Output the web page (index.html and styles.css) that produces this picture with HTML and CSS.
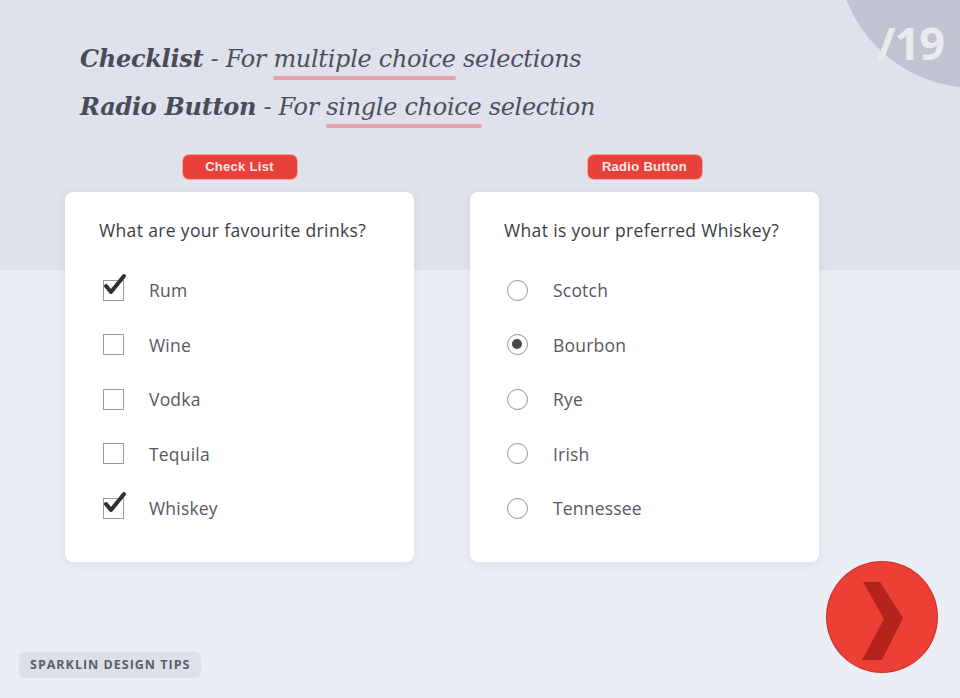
FILE: index.html
```html
<!DOCTYPE html>
<html lang="en">
<head>
  <meta charset="UTF-8">
  <meta name="viewport" content="width=device-width, initial-scale=1.0">
  <title>Checklist vs Radio Button</title>
  <link rel="stylesheet" href="styles.css">
</head>
<body>
  <div class="page">
    <div class="corner"><span>/19</span></div>

    <div class="intro">
      <p class="line"><b>Checklist</b> - For <span class="mark">multiple choice</span> selections</p>
      <p class="line"><b>Radio Button</b> - For <span class="mark">single choice</span> selection</p>
    </div>

    <div class="columns">
      <div class="column">
        <span class="badge">Check List</span>
        <div class="card">
          <p class="question">What are your favourite drinks?</p>
          <ul class="options">
            <li><span class="box checked"><svg viewBox="0 0 28 26"><path d="M6 13 L11 19 L24 3" /></svg></span>Rum</li>
            <li><span class="box"></span>Wine</li>
            <li><span class="box"></span>Vodka</li>
            <li><span class="box"></span>Tequila</li>
            <li><span class="box checked"><svg viewBox="0 0 28 26"><path d="M6 13 L11 19 L24 3" /></svg></span>Whiskey</li>
          </ul>
        </div>
      </div>

      <div class="column">
        <span class="badge">Radio Button</span>
        <div class="card">
          <p class="question">What is your preferred Whiskey?</p>
          <ul class="options">
            <li><span class="radio"></span>Scotch</li>
            <li><span class="radio on"></span>Bourbon</li>
            <li><span class="radio"></span>Rye</li>
            <li><span class="radio"></span>Irish</li>
            <li><span class="radio"></span>Tennessee</li>
          </ul>
        </div>
      </div>
    </div>

    <div class="footer">
      <span class="tag">SPARKLIN DESIGN TIPS</span>
      <div class="next">
        <svg viewBox="0 0 110 110"><path d="M36 20 L53 20 L76 56 L55 98 L35 98 L57 57 Z" /></svg>
      </div>
    </div>
  </div>
</body>
</html>
```

FILE: styles.css
```css
body {
  margin: 0;
  font-family: "Open Sans", Lato, sans-serif;
}
.page {
  position: relative;
  width: 960px;
  height: 698px;
  overflow: hidden;
  background: linear-gradient(#dfe2ec 0, #dfe2ec 270px, #eceef6 270px);
}
.corner {
  position: absolute;
  left: 837px;
  top: -188px;
  width: 276px;
  height: 276px;
  border-radius: 50%;
  background: #c0c4d0;
}
.corner span {
  position: absolute;
  left: 40px;
  top: 200px;
  font-family: "Open Sans", sans-serif;
  font-weight: 700;
  font-size: 45px;
  letter-spacing: -1px;
  color: #e9ebf1;
}
.intro {
  padding: 35px 0 0 80px;
}
.line {
  margin: 0;
  font-family: "DejaVu Serif", serif;
  font-style: italic;
  font-size: 24px;
  line-height: 48px;
  color: #4c505c;
  letter-spacing: -0.3px;
}
.line b {
  color: #484c58;
}
.mark {
  text-decoration: underline;
  text-decoration-color: #e4a2ab;
  text-decoration-thickness: 3.5px;
  text-underline-offset: 9px;
  text-decoration-skip-ink: none;
}
.columns {
  display: flex;
  gap: 56px;
  margin: 24px 0 0 65px;
}
.column {
  display: flex;
  flex-direction: column;
  align-items: center;
  width: 349px;
}
.badge {
  width: 114px;
  height: 24px;
  line-height: 24px;
  text-align: center;
  border-radius: 6px;
  background: #e8413a;
  color: #fbe8e6;
  font-family: "Liberation Sans", sans-serif;
  font-weight: 700;
  font-size: 13px;
  letter-spacing: 0.3px;
  box-shadow: 0 0 0 1px #f0a6a0;
}
.card {
  box-sizing: border-box;
  width: 349px;
  height: 370px;
  margin-top: 13px;
  padding: 26px 34px 0;
  background: #fff;
  border-radius: 8px;
  box-shadow: 0 2px 8px rgba(90, 96, 120, 0.12);
}
.question {
  margin: 0;
  font-size: 17.5px;
  letter-spacing: 0.35px;
  color: #3a3d45;
}
.options {
  list-style: none;
  margin: 21px 0 0;
  padding: 0;
}
.options li {
  display: flex;
  align-items: center;
  height: 54.5px;
  font-size: 17.5px;
  color: #56595f;
  letter-spacing: 0.2px;
}
.box {
  position: relative;
  box-sizing: border-box;
  width: 21px;
  height: 21px;
  margin: 0 25px 0 4px;
  border: 1.5px solid #9a9ca2;
}
.box svg {
  position: absolute;
  left: -4px;
  top: -8px;
  width: 28px;
  height: 26px;
}
.box path {
  fill: none;
  stroke: #2f3135;
  stroke-width: 4;
  stroke-linecap: round;
  stroke-linejoin: round;
}
.radio {
  position: relative;
  box-sizing: border-box;
  width: 21px;
  height: 21px;
  margin: 0 25px 0 3px;
  border: 1.5px solid #8e9096;
  border-radius: 50%;
}
.radio.on::after {
  content: "";
  position: absolute;
  left: 4px;
  top: 4px;
  width: 10px;
  height: 10px;
  border-radius: 50%;
  background: #46484d;
}
.footer {
  display: flex;
  justify-content: space-between;
  align-items: flex-end;
  padding: 0 23px 0 19px;
}
.tag {
  margin-bottom: 20px;
  padding: 0 11px;
  height: 26px;
  line-height: 26px;
  border-radius: 6px;
  background: #dde0e8;
  color: #5b5f6b;
  font-family: "Open Sans", sans-serif;
  font-weight: 700;
  font-size: 12.5px;
  letter-spacing: 1px;
}
.next {
  width: 110px;
  height: 110px;
  margin-bottom: 26px;
  border-radius: 50%;
  background: #ec3f35;
  box-shadow: 0 0 0 1px #c9312a;
}
.next svg {
  width: 110px;
  height: 110px;
}
.next path {
  fill: #b4231c;
}
```
